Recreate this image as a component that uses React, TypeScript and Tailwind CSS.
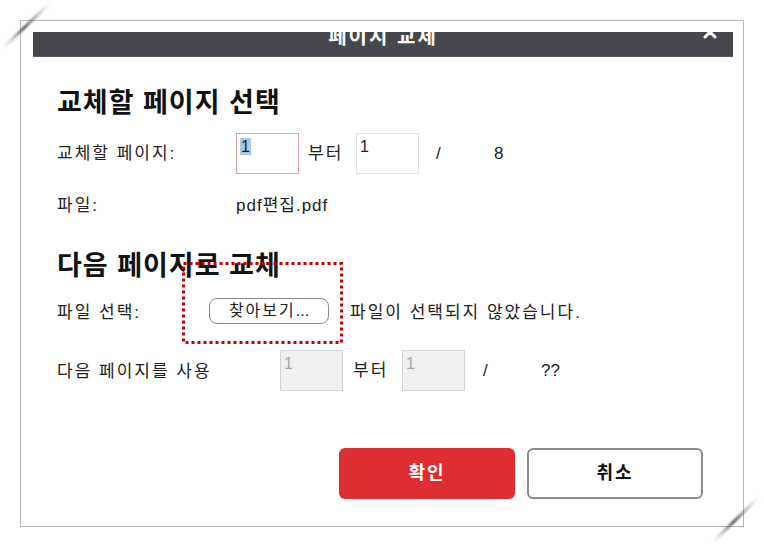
import React from "react";

const font = { fontFamily: "'Liberation Sans', 'Noto Sans CJK KR', sans-serif" };

function Box({ value, kind }: { value: string; kind: "active" | "plain" | "disabled" }) {
  const cls =
    kind === "active"
      ? "border-[#d9a6a6] bg-white text-[#1a1a1a]"
      : kind === "plain"
      ? "border-[#e2e2e2] bg-white text-[#222]"
      : "border-[#d4d4d4] bg-[#f0f0f0] text-[#a8a8a8]";
  return (
    <div className={`w-[63px] h-[41px] border ${cls} pl-[3px] pt-[4px] text-[16px] leading-[18px] tracking-normal`}>
      {kind === "active" ? <span className="bg-[#a9c9ec] px-[1px]">{value}</span> : value}
    </div>
  );
}

export default function App() {
  return (
    <div className="relative w-[764px] h-[547px] bg-white overflow-hidden text-[#222]" style={font}>
      <div className="ml-[20px] mt-[20px] w-[724px] h-[507px] border border-[#b8b8b8] bg-white">
        {/* title bar */}
        <div className="relative ml-[12px] mr-[10px] mt-[11px] h-[25px] bg-[#46474c] border-b border-[#5c5d62] overflow-hidden">
          <div className="text-center text-white font-bold text-[20px] leading-[20px] -mt-[5px] tracking-[2px]">
            페이지 교체
          </div>
          <svg className="absolute right-[16px] -top-[7px]" width="14" height="14" viewBox="0 0 14 14">
            <path d="M2 2 L12 12 M12 2 L2 12" stroke="white" strokeWidth="3" strokeLinecap="round" />
          </svg>
        </div>

        <div className="pl-[36px] pr-[40px] text-[17px] tracking-[2px]">
          <h2 className="mt-[31px] text-[27px] leading-[30px] font-bold text-[#111] tracking-[1px]">교체할 페이지 선택</h2>

          <div className="mt-[15px] flex items-center h-[41px]">
            <div className="w-[179px]">교체할 페이지:</div>
            <Box value="1" kind="active" />
            <div className="ml-[9px] w-[48px]">부터</div>
            <Box value="1" kind="plain" />
            <div className="ml-[17px] w-[58px] tracking-normal">/</div>
            <div className="tracking-normal">8</div>
          </div>

          <div className="mt-[20px] flex items-center h-[24px] leading-[24px]">
            <div className="w-[179px]">파일:</div>
            <div className="tracking-[1px]">pdf편집.pdf</div>
          </div>

          <h2 className="mt-[33px] text-[27px] leading-[30px] font-bold text-[#111] tracking-[1px]">다음 페이지로 교체</h2>

          <div className="mt-[17px] flex items-center h-[26px]">
            <div className="w-[152px] pt-[3px]">파일 선택:</div>
            <div className="w-[120px] h-[26px] rounded-[8px] border border-[#8a8a8a] bg-white flex items-center justify-center text-[16px]">
              찾아보기<span className="tracking-normal">...</span>
            </div>
            <div className="ml-[21px] pt-[3px]">파일이 선택되지 않았습니다.</div>
          </div>

          <div className="mt-[26px] flex items-center h-[41px]">
            <div className="w-[223px] pt-[3px]">다음 페이지를 사용</div>
            <Box value="1" kind="disabled" />
            <div className="ml-[10px] w-[49px]">부터</div>
            <Box value="1" kind="disabled" />
            <div className="ml-[18px] w-[58px] tracking-normal">/</div>
            <div className="tracking-normal">??</div>
          </div>

          <div className="mt-[57px] flex justify-end gap-[12px]">
            <button className="w-[176px] h-[51px] rounded-[6px] bg-[#dc2e33] text-white font-bold text-[18px]">
              확인
            </button>
            <button className="w-[176px] h-[51px] rounded-[6px] border-2 border-[#8c8c8c] bg-white text-[#111] font-bold text-[18px]">
              취소
            </button>
          </div>
        </div>
      </div>

      {/* red dotted annotation */}
      <svg className="absolute left-[181px] top-[261px] pointer-events-none" width="164" height="84" viewBox="0 0 164 84">
        <rect x="2.5" y="2.5" width="158" height="79" fill="none" stroke="#c20000" strokeWidth="3" strokeDasharray="3 3" />
      </svg>

      {/* page-curl slashes */}
      <svg className="absolute inset-0 pointer-events-none" width="764" height="547" viewBox="0 0 764 547">
        <defs>
          <linearGradient id="g1" x1="0" y1="1" x2="1" y2="0">
            <stop offset="0" stopColor="#999" stopOpacity="0" />
            <stop offset="0.45" stopColor="#444" stopOpacity="0.95" />
            <stop offset="1" stopColor="#999" stopOpacity="0" />
          </linearGradient>
          <filter id="bl" x="-20%" y="-20%" width="140%" height="140%">
            <feGaussianBlur stdDeviation="1" />
          </filter>
        </defs>
        <line x1="3" y1="48" x2="50" y2="3" stroke="url(#g1)" strokeWidth="3" filter="url(#bl)" />
        <line x1="713" y1="542" x2="759" y2="497" stroke="url(#g1)" strokeWidth="3" filter="url(#bl)" />
      </svg>
    </div>
  );
}
